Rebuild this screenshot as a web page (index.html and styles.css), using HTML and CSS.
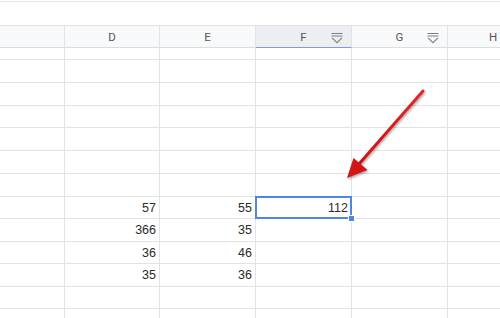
FILE: index.html
```html
<!DOCTYPE html>
<html lang="en">
<head>
  <meta charset="UTF-8" />
  <title>Sheet</title>
  <link rel="stylesheet" href="styles.css">
</head>
<body>

  <div class="toolbar"></div>

  <div class="sheet">
    <div class="row head">
      <div class="cell col-c"></div>
      <div class="cell col-d">D</div>
      <div class="cell col-e">E</div>
      <div class="cell col-f picked">F
        <svg class="filter" viewBox="0 0 12 12"><path d="M0 0.6H12M0 3.2H12M0.6 5.4L6 10.6L11.4 5.4" /></svg>
      </div>
      <div class="cell col-g">G
        <svg class="filter" viewBox="0 0 12 12"><path d="M0 0.6H12M0 3.2H12M0.6 5.4L6 10.6L11.4 5.4" /></svg>
      </div>
      <div class="cell col-h">H</div>
    </div>

    <div class="row stub">
      <div class="cell col-c"></div><div class="cell col-d"></div><div class="cell col-e"></div><div class="cell col-f"></div><div class="cell col-g"></div><div class="cell col-h"></div>
    </div>
    <div class="row tall">
      <div class="cell col-c"></div><div class="cell col-d"></div><div class="cell col-e"></div><div class="cell col-f"></div><div class="cell col-g"></div><div class="cell col-h"></div>
    </div>
    <div class="row tall">
      <div class="cell col-c"></div><div class="cell col-d"></div><div class="cell col-e"></div><div class="cell col-f"></div><div class="cell col-g"></div><div class="cell col-h"></div>
    </div>
    <div class="row short">
      <div class="cell col-c"></div><div class="cell col-d"></div><div class="cell col-e"></div><div class="cell col-f"></div><div class="cell col-g"></div><div class="cell col-h"></div>
    </div>
    <div class="row tall">
      <div class="cell col-c"></div><div class="cell col-d"></div><div class="cell col-e"></div><div class="cell col-f"></div><div class="cell col-g"></div><div class="cell col-h"></div>
    </div>
    <div class="row tall">
      <div class="cell col-c"></div><div class="cell col-d"></div><div class="cell col-e"></div><div class="cell col-f"></div><div class="cell col-g"></div><div class="cell col-h"></div>
    </div>
    <div class="row tall">
      <div class="cell col-c"></div><div class="cell col-d"></div><div class="cell col-e"></div><div class="cell col-f"></div><div class="cell col-g"></div><div class="cell col-h"></div>
    </div>
    <div class="row short">
      <div class="cell col-c"></div><div class="cell col-d">57</div><div class="cell col-e">55</div><div class="cell col-f active">112</div><div class="cell col-g"></div><div class="cell col-h"></div>
    </div>
    <div class="row tall">
      <div class="cell col-c"></div><div class="cell col-d">366</div><div class="cell col-e">35</div><div class="cell col-f"></div><div class="cell col-g"></div><div class="cell col-h"></div>
    </div>
    <div class="row short">
      <div class="cell col-c"></div><div class="cell col-d">36</div><div class="cell col-e">46</div><div class="cell col-f"></div><div class="cell col-g"></div><div class="cell col-h"></div>
    </div>
    <div class="row tall">
      <div class="cell col-c"></div><div class="cell col-d">35</div><div class="cell col-e">36</div><div class="cell col-f"></div><div class="cell col-g"></div><div class="cell col-h"></div>
    </div>
    <div class="row short">
      <div class="cell col-c"></div><div class="cell col-d"></div><div class="cell col-e"></div><div class="cell col-f"></div><div class="cell col-g"></div><div class="cell col-h"></div>
    </div>
    <div class="row tall">
      <div class="cell col-c"></div><div class="cell col-d"></div><div class="cell col-e"></div><div class="cell col-f"></div><div class="cell col-g"></div><div class="cell col-h"></div>
    </div>
  </div>

  <!-- annotation arrow drawn over the sheet -->
  <svg class="arrow" viewBox="0 0 500 318">
    <defs>
      <filter id="shade" x="-20%" y="-20%" width="140%" height="140%">
        <feDropShadow dx="1" dy="1.5" stdDeviation="1" flood-color="#000" flood-opacity="0.35" />
      </filter>
      <linearGradient id="red" x1="0" y1="0" x2="0" y2="1">
        <stop offset="0" stop-color="#e0282b" />
        <stop offset="1" stop-color="#cc1013" />
      </linearGradient>
    </defs>
    <g filter="url(#shade)">
      <line x1="423" y1="91" x2="359" y2="164" stroke="url(#red)" stroke-width="3" stroke-linecap="round" />
      <polygon points="347,178 353.5,158 367.5,170" fill="#d21417" />
    </g>
  </svg>

</body>
</html>
```

FILE: styles.css
```css
/* Base */
body {
  margin: 0;
  width: 500px;
  height: 318px;
  overflow: hidden;
  background: #fff;
  font-family: 'Liberation Sans', Arial, sans-serif;
  position: relative;
}

/* strip above the column letters */
.toolbar {
  height: 23px;
  margin-top: 1px;
  border-top: 1px solid #e6e6e6;
}

/* Grid */
.sheet {
  display: flex;
  flex-direction: column;
}
.row {
  display: flex;
  flex: none;
}
.row.head { height: 23px; }
.row.stub { height: 12px; }
.row.tall { height: 23px; }
.row.short { height: 22px; }

.cell {
  flex: none;
  box-sizing: border-box;
  border-right: 1px solid #e2e3e3;
  border-bottom: 1px solid #e2e3e3;
  display: flex;
  align-items: center;
  justify-content: flex-end;
  padding-right: 3px;
  font-size: 12.5px;
  color: #2b2b2b;
  position: relative;
}
.col-c { width: 65px; }
.col-d { width: 95px; }
.col-e { width: 96px; }
.col-f { width: 96px; }
.col-g { width: 96px; }
.col-h {
  flex: 1;
  border-right: none;
}

/* Column header */
.head .cell {
  background: #f8f9fa;
  border-top: 1px solid #e3e3e3;
  border-bottom-color: #dadce0;
  justify-content: center;
  padding: 0;
  font-family: Roboto, 'Liberation Sans', Arial, sans-serif;
  font-size: 11.5px;
  color: #555;
}
/* H column is cut by the window edge, its letter sits near the right */
.head .col-h {
  justify-content: flex-start;
  padding-left: 41px;
}
.head .cell.picked {
  background: #eceef2;
  border-bottom: 1px solid #7d9bdc;
}
.filter {
  position: absolute;
  right: 8px;
  top: 7px;
  width: 12px;
  height: 11px;
  fill: none;
  stroke: #7b7f84;
  stroke-width: 1.2;
}

/* Selected cell */
.cell.active::after {
  content: "";
  position: absolute;
  top: -1px;
  left: -1px;
  right: -1px;
  bottom: -1px;
  border: 2px solid #4f86e3;
}
.cell.active::before {
  content: "";
  position: absolute;
  right: -4px;
  bottom: -4px;
  width: 5px;
  height: 5px;
  background: #4f86e3;
  border: 1px solid #fff;
  z-index: 1;
}

/* Arrow overlay */
.arrow {
  position: absolute;
  left: 0;
  top: 0;
  width: 500px;
  height: 318px;
  pointer-events: none;
}
```
